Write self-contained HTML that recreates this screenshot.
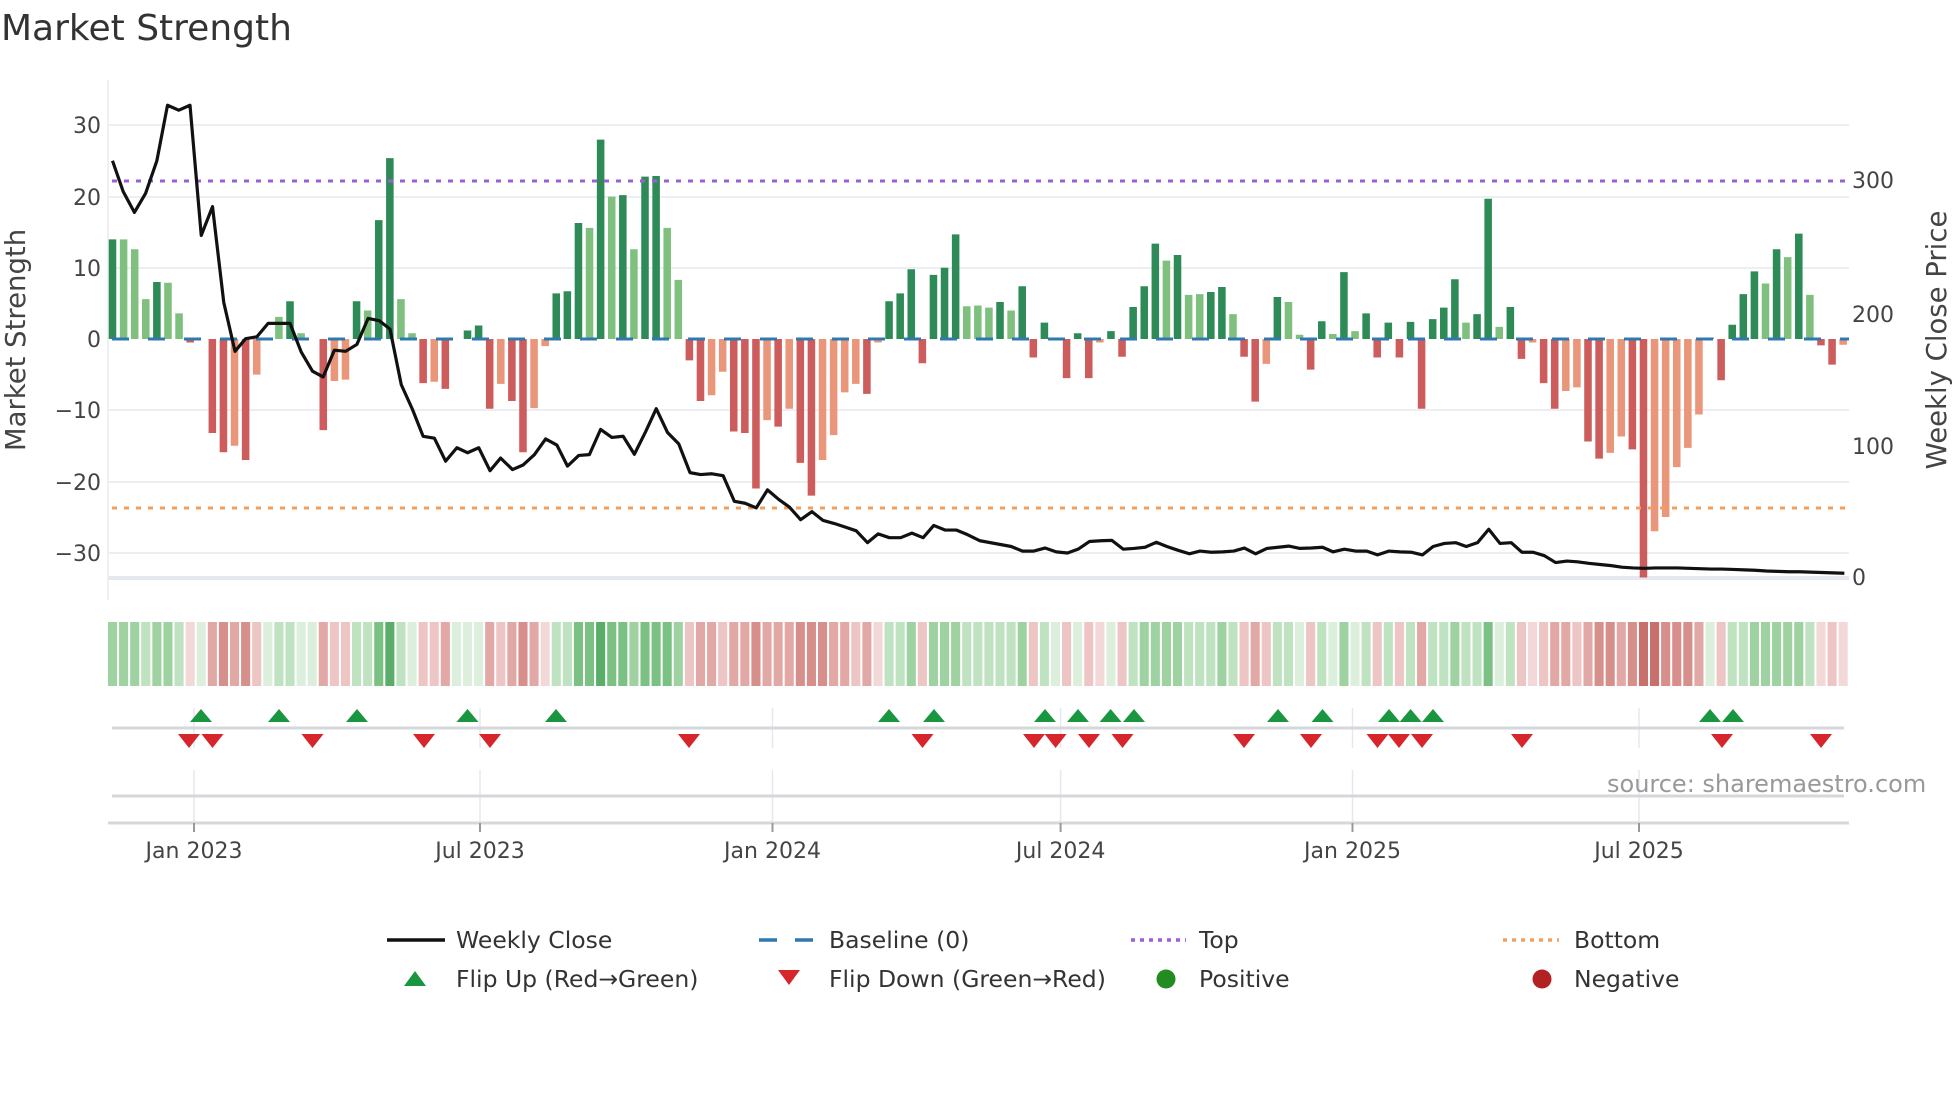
<!DOCTYPE html>
<html><head><meta charset="utf-8"><style>
html,body{margin:0;padding:0;background:#fff;}
svg{display:block;font-family:"DejaVu Sans","Liberation Sans",sans-serif;}
</style></head><body>
<svg width="1960" height="1102" viewBox="0 0 1960 1102" xmlns="http://www.w3.org/2000/svg">
<defs>
<path id="up" d="M-11 13 L0 0 L11 13 Z" fill="#1a9641"/>
<path id="dn" d="M-11 0 L11 0 L0 14 Z" fill="#d7262b"/>
</defs>
<text x="1" y="40" font-size="36" fill="#333">Market Strength</text>

<g stroke="#eceef3" stroke-width="2">
<line x1="108" y1="125" x2="1849" y2="125"/>
<line x1="108" y1="197" x2="1849" y2="197"/>
<line x1="108" y1="268" x2="1849" y2="268"/>
<line x1="108" y1="410" x2="1849" y2="410"/>
<line x1="108" y1="482" x2="1849" y2="482"/>
<line x1="108" y1="553" x2="1849" y2="553"/>
</g>
<line x1="108" y1="578" x2="1849" y2="578" stroke="#e6e8ef" stroke-width="4"/>
<line x1="108" y1="80" x2="108" y2="600" stroke="#ececf0" stroke-width="1.5"/>

<g font-size="22" fill="#444" text-anchor="end">
<text x="101" y="133">30</text>
<text x="101" y="205">20</text>
<text x="101" y="276">10</text>
<text x="101" y="347">0</text>
<text x="101" y="418">−10</text>
<text x="101" y="490">−20</text>
<text x="101" y="561">−30</text>
</g>
<g font-size="22" fill="#444">
<text x="1852" y="188">300</text>
<text x="1852" y="322">200</text>
<text x="1852" y="454">100</text>
<text x="1852" y="585">0</text>
</g>
<text transform="translate(25,340) rotate(-90)" font-size="27.5" fill="#444" text-anchor="middle">Market Strength</text>
<text transform="translate(1946,340) rotate(-90)" font-size="27.5" fill="#444" text-anchor="middle">Weekly Close Price</text>

<g transform="translate(112.5,339) scale(11.094,-7.12)">
<path fill="#2e8b57" d="M-.34 0h.68V14h-.68zM3.66 0h.68V8h-.68zM15.66 0h.68V5.3h-.68zM21.66 0h.68V5.3h-.68zM23.66 0h.68V16.7h-.68zM24.66 0h.68V25.4h-.68zM31.66 0h.68V1.2h-.68zM32.66 0h.68V1.9h-.68zM39.66 0h.68V6.4h-.68zM40.66 0h.68V6.7h-.68zM41.66 0h.68V16.3h-.68zM43.66 0h.68V28h-.68zM45.66 0h.68V20.2h-.68zM47.66 0h.68V22.8h-.68zM48.66 0h.68V22.9h-.68zM69.66 0h.68V5.3h-.68zM70.66 0h.68V6.4h-.68zM71.66 0h.68V9.8h-.68zM73.66 0h.68V9h-.68zM74.66 0h.68V10h-.68zM75.66 0h.68V14.7h-.68zM79.66 0h.68V5.2h-.68zM81.66 0h.68V7.4h-.68zM83.66 0h.68V2.3h-.68zM86.66 0h.68V.8h-.68zM89.66 0h.68V1.1h-.68zM91.66 0h.68V4.5h-.68zM92.66 0h.68V7.4h-.68zM93.66 0h.68V13.4h-.68zM95.66 0h.68V11.8h-.68zM98.66 0h.68V6.6h-.68zM99.66 0h.68V7.3h-.68zM104.66 0h.68V5.9h-.68zM108.66 0h.68V2.5h-.68zM110.66 0h.68V9.4h-.68zM112.66 0h.68V3.6h-.68zM114.66 0h.68V2.3h-.68zM116.66 0h.68V2.4h-.68zM118.66 0h.68V2.8h-.68zM119.66 0h.68V4.4h-.68zM120.66 0h.68V8.4h-.68zM122.66 0h.68V3.5h-.68zM123.66 0h.68V19.7h-.68zM125.66 0h.68V4.5h-.68zM143.66 0h.68V.2h-.68zM145.66 0h.68V2h-.68zM146.66 0h.68V6.3h-.68zM147.66 0h.68V9.5h-.68zM149.66 0h.68V12.6h-.68zM151.66 0h.68V14.8h-.68z"/>
<path fill="#80c07e" d="M.66 0h.68V14h-.68zM1.66 0h.68V12.6h-.68zM2.66 0h.68V5.6h-.68zM4.66 0h.68V7.9h-.68zM5.66 0h.68V3.6h-.68zM14.66 0h.68V3.1h-.68zM16.66 0h.68V.8h-.68zM22.66 0h.68V4h-.68zM25.66 0h.68V5.6h-.68zM26.66 0h.68V.8h-.68zM42.66 0h.68V15.6h-.68zM44.66 0h.68V20h-.68zM46.66 0h.68V12.6h-.68zM49.66 0h.68V15.6h-.68zM50.66 0h.68V8.3h-.68zM76.66 0h.68V4.6h-.68zM77.66 0h.68V4.7h-.68zM78.66 0h.68V4.4h-.68zM80.66 0h.68V4h-.68zM94.66 0h.68V11h-.68zM96.66 0h.68V6.2h-.68zM97.66 0h.68V6.3h-.68zM100.66 0h.68V3.5h-.68zM105.66 0h.68V5.2h-.68zM106.66 0h.68V.6h-.68zM109.66 0h.68V.7h-.68zM111.66 0h.68V1.1h-.68zM121.66 0h.68V2.3h-.68zM124.66 0h.68V1.7h-.68zM148.66 0h.68V7.8h-.68zM150.66 0h.68V11.5h-.68zM152.66 0h.68V6.2h-.68z"/>
<path fill="#cd5c5c" d="M6.66 0h.68V-.5h-.68zM8.66 0h.68V-13.2h-.68zM9.66 0h.68V-15.9h-.68zM11.66 0h.68V-17h-.68zM18.66 0h.68V-12.8h-.68zM27.66 0h.68V-6.2h-.68zM29.66 0h.68V-7h-.68zM33.66 0h.68V-9.8h-.68zM35.66 0h.68V-8.7h-.68zM36.66 0h.68V-15.9h-.68zM51.66 0h.68V-3h-.68zM52.66 0h.68V-8.7h-.68zM55.66 0h.68V-13h-.68zM56.66 0h.68V-13.2h-.68zM57.66 0h.68V-21h-.68zM59.66 0h.68V-12.3h-.68zM61.66 0h.68V-17.4h-.68zM62.66 0h.68V-22h-.68zM67.66 0h.68V-7.7h-.68zM72.66 0h.68V-3.4h-.68zM82.66 0h.68V-2.6h-.68zM85.66 0h.68V-5.5h-.68zM87.66 0h.68V-5.5h-.68zM90.66 0h.68V-2.5h-.68zM101.66 0h.68V-2.5h-.68zM102.66 0h.68V-8.8h-.68zM107.66 0h.68V-4.3h-.68zM113.66 0h.68V-2.6h-.68zM115.66 0h.68V-2.6h-.68zM117.66 0h.68V-9.8h-.68zM126.66 0h.68V-2.8h-.68zM128.66 0h.68V-6.2h-.68zM129.66 0h.68V-9.8h-.68zM132.66 0h.68V-14.4h-.68zM133.66 0h.68V-16.8h-.68zM136.66 0h.68V-15.5h-.68zM137.66 0h.68V-33.5h-.68zM144.66 0h.68V-5.8h-.68zM153.66 0h.68V-.9h-.68zM154.66 0h.68V-3.6h-.68z"/>
<path fill="#e9967a" d="M10.66 0h.68V-15h-.68zM12.66 0h.68V-5h-.68zM19.66 0h.68V-5.9h-.68zM20.66 0h.68V-5.7h-.68zM28.66 0h.68V-6h-.68zM34.66 0h.68V-6.3h-.68zM37.66 0h.68V-9.7h-.68zM38.66 0h.68V-1h-.68zM53.66 0h.68V-7.9h-.68zM54.66 0h.68V-4.6h-.68zM58.66 0h.68V-11.4h-.68zM60.66 0h.68V-9.8h-.68zM63.66 0h.68V-17h-.68zM64.66 0h.68V-13.5h-.68zM65.66 0h.68V-7.5h-.68zM66.66 0h.68V-6.3h-.68zM68.66 0h.68V-.5h-.68zM88.66 0h.68V-.5h-.68zM103.66 0h.68V-3.5h-.68zM127.66 0h.68V-.5h-.68zM130.66 0h.68V-7.3h-.68zM131.66 0h.68V-6.8h-.68zM134.66 0h.68V-16h-.68zM135.66 0h.68V-13.7h-.68zM138.66 0h.68V-27h-.68zM139.66 0h.68V-25h-.68zM140.66 0h.68V-18h-.68zM141.66 0h.68V-15.3h-.68zM142.66 0h.68V-10.6h-.68zM155.66 0h.68V-.8h-.68z"/>
</g>

<line x1="112" y1="339" x2="1849" y2="339" stroke="#2f78b0" stroke-width="3" stroke-dasharray="17 19"/>
<line x1="112" y1="181" x2="1849" y2="181" stroke="#9b5fd6" stroke-width="3" stroke-dasharray="5 7"/>
<line x1="112" y1="508" x2="1849" y2="508" stroke="#f2a060" stroke-width="3" stroke-dasharray="5 7"/>

<g transform="scale(0.625,0.3827)">
<polyline fill="none" stroke="#111" stroke-width="3.2" vector-effect="non-scaling-stroke" stroke-linejoin="round" points="180,420 197,500 215,555 233,505 251,420 268,275 286,288 304,275 322,615 340,540 358,790 376,918 393,885 411,880 429,845 446,845 464,845 482,920 500,970 517,985 535,915 553,918 571,900 589,832 607,838 624,860 642,1005 660,1070 677,1140 695,1145 713,1205 731,1170 748,1183 766,1170 784,1230 801,1197 820,1227 837,1215 855,1188 873,1147 891,1163 908,1218 926,1190 943,1188 961,1122 979,1143 997,1140 1015,1187 1033,1128 1050,1068 1068,1130 1086,1160 1104,1235 1121,1240 1139,1238 1157,1243 1175,1310 1192,1315 1210,1327 1228,1280 1246,1305 1263,1325 1281,1358 1299,1337 1317,1360 1335,1368 1352,1377 1370,1387 1388,1418 1405,1395 1423,1405 1441,1405 1459,1393 1477,1405 1494,1373 1512,1385 1530,1385 1548,1397 1568,1413 1618,1428 1636,1440 1654,1440 1672,1432 1690,1442 1708,1445 1725,1435 1743,1415 1761,1413 1779,1412 1797,1435 1814,1433 1832,1430 1850,1417 1867,1428 1885,1438 1903,1447 1920,1440 1938,1443 1956,1442 1974,1440 1991,1432 2009,1447 2027,1433 2045,1430 2062,1427 2080,1433 2098,1432 2116,1430 2133,1442 2151,1435 2169,1440 2187,1440 2204,1450 2222,1440 2240,1442 2258,1443 2276,1450 2293,1428 2311,1420 2329,1418 2346,1428 2364,1418 2382,1383 2400,1420 2418,1418 2435,1443 2453,1443 2471,1452 2489,1470 2507,1466 2524,1468 2542,1472 2560,1475 2578,1478 2595,1482 2613,1484 2631,1485 2649,1484 2667,1484 2684,1484 2702,1485 2720,1486 2738,1487 2755,1487 2773,1488 2791,1489 2808,1490 2826,1492 2844,1493 2862,1494 2879,1494 2897,1495 2915,1496 2933,1497 2951,1498"/>
</g>

<g transform="translate(112.5,622) scale(11.094,1)">
<path fill="#dcefdc" d="M7.59 0h.82v64h-.82zM13.59 0h.82v64h-.82zM16.59 0h.82v64h-.82zM17.59 0h.82v64h-.82zM26.59 0h.82v64h-.82zM30.59 0h.82v64h-.82zM31.59 0h.82v64h-.82zM32.59 0h.82v64h-.82zM84.59 0h.82v64h-.82zM86.59 0h.82v64h-.82zM89.59 0h.82v64h-.82zM106.59 0h.82v64h-.82zM109.59 0h.82v64h-.82zM111.59 0h.82v64h-.82zM124.59 0h.82v64h-.82zM143.59 0h.82v64h-.82z"/>
<path fill="#bfe2c1" d="M2.59 0h.82v64h-.82zM5.59 0h.82v64h-.82zM14.59 0h.82v64h-.82zM15.59 0h.82v64h-.82zM21.59 0h.82v64h-.82zM22.59 0h.82v64h-.82zM25.59 0h.82v64h-.82zM39.59 0h.82v64h-.82zM40.59 0h.82v64h-.82zM69.59 0h.82v64h-.82zM70.59 0h.82v64h-.82zM76.59 0h.82v64h-.82zM77.59 0h.82v64h-.82zM78.59 0h.82v64h-.82zM79.59 0h.82v64h-.82zM80.59 0h.82v64h-.82zM83.59 0h.82v64h-.82zM91.59 0h.82v64h-.82zM96.59 0h.82v64h-.82zM97.59 0h.82v64h-.82zM98.59 0h.82v64h-.82zM100.59 0h.82v64h-.82zM104.59 0h.82v64h-.82zM105.59 0h.82v64h-.82zM108.59 0h.82v64h-.82zM112.59 0h.82v64h-.82zM114.59 0h.82v64h-.82zM116.59 0h.82v64h-.82zM118.59 0h.82v64h-.82zM119.59 0h.82v64h-.82zM121.59 0h.82v64h-.82zM122.59 0h.82v64h-.82zM125.59 0h.82v64h-.82zM145.59 0h.82v64h-.82zM146.59 0h.82v64h-.82zM152.59 0h.82v64h-.82z"/>
<path fill="#9ed2a1" d="M-.41 0h.82v64h-.82zM.59 0h.82v64h-.82zM1.59 0h.82v64h-.82zM3.59 0h.82v64h-.82zM4.59 0h.82v64h-.82zM46.59 0h.82v64h-.82zM50.59 0h.82v64h-.82zM71.59 0h.82v64h-.82zM73.59 0h.82v64h-.82zM74.59 0h.82v64h-.82zM75.59 0h.82v64h-.82zM81.59 0h.82v64h-.82zM92.59 0h.82v64h-.82zM93.59 0h.82v64h-.82zM94.59 0h.82v64h-.82zM95.59 0h.82v64h-.82zM99.59 0h.82v64h-.82zM110.59 0h.82v64h-.82zM120.59 0h.82v64h-.82zM147.59 0h.82v64h-.82zM148.59 0h.82v64h-.82zM149.59 0h.82v64h-.82zM150.59 0h.82v64h-.82zM151.59 0h.82v64h-.82z"/>
<path fill="#7cc184" d="M23.59 0h.82v64h-.82zM41.59 0h.82v64h-.82zM42.59 0h.82v64h-.82zM44.59 0h.82v64h-.82zM45.59 0h.82v64h-.82zM47.59 0h.82v64h-.82zM48.59 0h.82v64h-.82zM49.59 0h.82v64h-.82zM123.59 0h.82v64h-.82z"/>
<path fill="#5aae6a" d="M24.59 0h.82v64h-.82zM43.59 0h.82v64h-.82z"/>
<path fill="#f3d8d8" d="M6.59 0h.82v64h-.82zM38.59 0h.82v64h-.82zM68.59 0h.82v64h-.82zM88.59 0h.82v64h-.82zM127.59 0h.82v64h-.82zM153.59 0h.82v64h-.82zM155.59 0h.82v64h-.82z"/>
<path fill="#ecc5c4" d="M12.59 0h.82v64h-.82zM19.59 0h.82v64h-.82zM20.59 0h.82v64h-.82zM27.59 0h.82v64h-.82zM28.59 0h.82v64h-.82zM34.59 0h.82v64h-.82zM51.59 0h.82v64h-.82zM54.59 0h.82v64h-.82zM66.59 0h.82v64h-.82zM72.59 0h.82v64h-.82zM82.59 0h.82v64h-.82zM85.59 0h.82v64h-.82zM87.59 0h.82v64h-.82zM90.59 0h.82v64h-.82zM101.59 0h.82v64h-.82zM103.59 0h.82v64h-.82zM107.59 0h.82v64h-.82zM113.59 0h.82v64h-.82zM115.59 0h.82v64h-.82zM126.59 0h.82v64h-.82zM128.59 0h.82v64h-.82zM131.59 0h.82v64h-.82zM144.59 0h.82v64h-.82zM154.59 0h.82v64h-.82z"/>
<path fill="#e2a8a5" d="M8.59 0h.82v64h-.82zM10.59 0h.82v64h-.82zM18.59 0h.82v64h-.82zM29.59 0h.82v64h-.82zM33.59 0h.82v64h-.82zM35.59 0h.82v64h-.82zM37.59 0h.82v64h-.82zM52.59 0h.82v64h-.82zM53.59 0h.82v64h-.82zM55.59 0h.82v64h-.82zM56.59 0h.82v64h-.82zM58.59 0h.82v64h-.82zM59.59 0h.82v64h-.82zM60.59 0h.82v64h-.82zM64.59 0h.82v64h-.82zM65.59 0h.82v64h-.82zM67.59 0h.82v64h-.82zM102.59 0h.82v64h-.82zM117.59 0h.82v64h-.82zM129.59 0h.82v64h-.82zM130.59 0h.82v64h-.82zM132.59 0h.82v64h-.82zM135.59 0h.82v64h-.82zM142.59 0h.82v64h-.82z"/>
<path fill="#d68f8b" d="M9.59 0h.82v64h-.82zM11.59 0h.82v64h-.82zM36.59 0h.82v64h-.82zM57.59 0h.82v64h-.82zM61.59 0h.82v64h-.82zM62.59 0h.82v64h-.82zM63.59 0h.82v64h-.82zM133.59 0h.82v64h-.82zM134.59 0h.82v64h-.82zM136.59 0h.82v64h-.82zM139.59 0h.82v64h-.82zM140.59 0h.82v64h-.82zM141.59 0h.82v64h-.82z"/>
<path fill="#c8706b" d="M137.59 0h.82v64h-.82zM138.59 0h.82v64h-.82z"/>
</g>

<g stroke="#e6e8f0" stroke-width="1.5">
<line x1="194" y1="708" x2="194" y2="748"/><line x1="194" y1="770" x2="194" y2="823"/>
<line x1="480" y1="708" x2="480" y2="748"/><line x1="480" y1="770" x2="480" y2="823"/>
<line x1="772.5" y1="708" x2="772.5" y2="748"/><line x1="772.5" y1="770" x2="772.5" y2="823"/>
<line x1="1060.6" y1="708" x2="1060.6" y2="748"/><line x1="1060.6" y1="770" x2="1060.6" y2="823"/>
<line x1="1352.5" y1="708" x2="1352.5" y2="748"/><line x1="1352.5" y1="770" x2="1352.5" y2="823"/>
<line x1="1639" y1="708" x2="1639" y2="748"/><line x1="1639" y1="770" x2="1639" y2="823"/>
</g>
<line x1="112" y1="728" x2="1844" y2="728" stroke="#d6d7db" stroke-width="3"/>
<line x1="112" y1="796" x2="1844" y2="796" stroke="#d6d7db" stroke-width="3"/>
<line x1="108" y1="823" x2="1849" y2="823" stroke="#d6d7db" stroke-width="3"/>
<g stroke="#999" stroke-width="2">
<line x1="194" y1="823" x2="194" y2="832"/><line x1="480" y1="823" x2="480" y2="832"/><line x1="772.5" y1="823" x2="772.5" y2="832"/>
<line x1="1060.6" y1="823" x2="1060.6" y2="832"/><line x1="1352.5" y1="823" x2="1352.5" y2="832"/><line x1="1639" y1="823" x2="1639" y2="832"/>
</g>
<g>
<use href="#up" x="201" y="709"/><use href="#up" x="279" y="709"/><use href="#up" x="357" y="709"/><use href="#up" x="467.5" y="709"/><use href="#up" x="556" y="709"/><use href="#up" x="889" y="709"/><use href="#up" x="934" y="709"/><use href="#up" x="1045" y="709"/><use href="#up" x="1078" y="709"/><use href="#up" x="1110.6" y="709"/><use href="#up" x="1134" y="709"/><use href="#up" x="1278" y="709"/><use href="#up" x="1322.5" y="709"/><use href="#up" x="1389" y="709"/><use href="#up" x="1410.6" y="709"/><use href="#up" x="1433" y="709"/><use href="#up" x="1710" y="709"/><use href="#up" x="1733" y="709"/>
<use href="#dn" x="189" y="734"/><use href="#dn" x="212.5" y="734"/><use href="#dn" x="312.5" y="734"/><use href="#dn" x="424" y="734"/><use href="#dn" x="490" y="734"/><use href="#dn" x="689" y="734"/><use href="#dn" x="922.5" y="734"/><use href="#dn" x="1034" y="734"/><use href="#dn" x="1055.6" y="734"/><use href="#dn" x="1089" y="734"/><use href="#dn" x="1122.5" y="734"/><use href="#dn" x="1244" y="734"/><use href="#dn" x="1311" y="734"/><use href="#dn" x="1377.5" y="734"/><use href="#dn" x="1399" y="734"/><use href="#dn" x="1422" y="734"/><use href="#dn" x="1522" y="734"/><use href="#dn" x="1722" y="734"/><use href="#dn" x="1821" y="734"/>
</g>
<text x="1607" y="792" font-size="24" fill="#999">source: sharemaestro.com</text>
<g font-size="22" fill="#444" text-anchor="middle">
<text x="194" y="858">Jan 2023</text>
<text x="480" y="858">Jul 2023</text>
<text x="772.5" y="858">Jan 2024</text>
<text x="1060.6" y="858">Jul 2024</text>
<text x="1352.5" y="858">Jan 2025</text>
<text x="1639" y="858">Jul 2025</text>
</g>

<line x1="387" y1="940" x2="445" y2="940" stroke="#111" stroke-width="3.5"/>
<line x1="759" y1="940" x2="777" y2="940" stroke="#2f78b0" stroke-width="3.5"/>
<line x1="795" y1="940" x2="813" y2="940" stroke="#2f78b0" stroke-width="3.5"/>
<line x1="1131" y1="940" x2="1186" y2="940" stroke="#9b5fd6" stroke-width="3.5" stroke-dasharray="4 5"/>
<line x1="1503" y1="940" x2="1559" y2="940" stroke="#f2a060" stroke-width="3.5" stroke-dasharray="4 5"/>
<path d="M404 986 L415 971 L426 986 Z" fill="#1a9641"/>
<path d="M778 970 L800 970 L789 985 Z" fill="#d7262b"/>
<circle cx="1166" cy="979" r="9.5" fill="#228b22"/>
<circle cx="1542" cy="979" r="9.5" fill="#b22222"/>
<g font-size="23.5" fill="#333">
<text x="456" y="948">Weekly Close</text>
<text x="829" y="948">Baseline (0)</text>
<text x="1199" y="948">Top</text>
<text x="1574" y="948">Bottom</text>
<text x="456" y="987">Flip Up (Red→Green)</text>
<text x="829" y="987">Flip Down (Green→Red)</text>
<text x="1199" y="987">Positive</text>
<text x="1574" y="987">Negative</text>
</g>
</svg>
</body></html>
